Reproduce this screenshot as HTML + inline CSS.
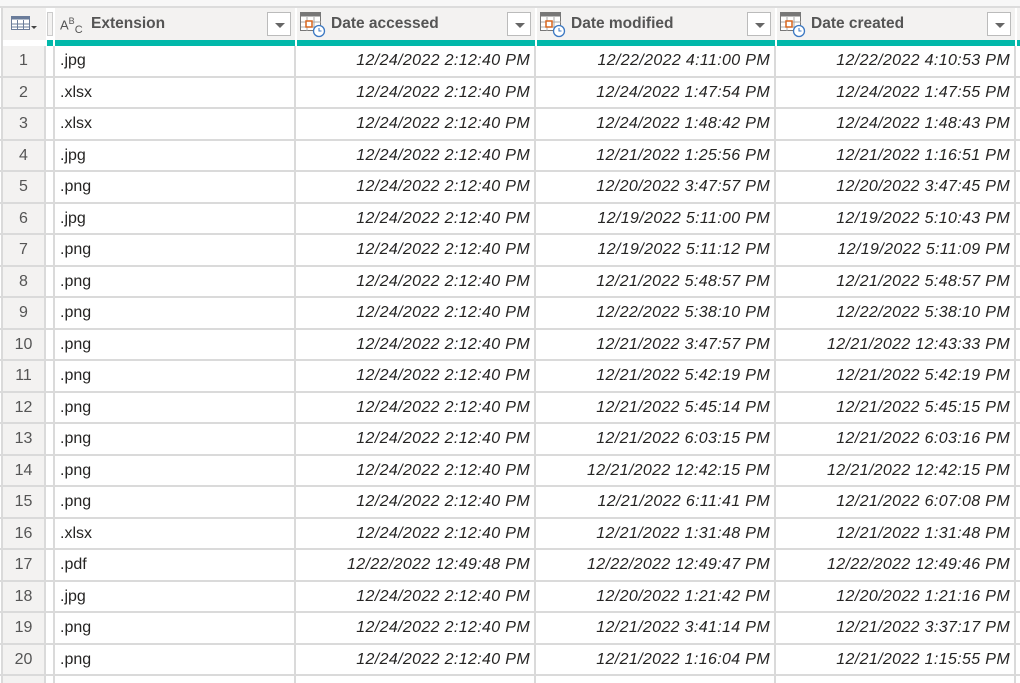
<!DOCTYPE html>
<html style="overflow:hidden;width:1020px;height:683px"><head><meta charset="utf-8"><style>
*{box-sizing:border-box;margin:0;padding:0}
body{width:1020px;height:683px;overflow:hidden;background:#fff;font-family:"Liberation Sans",sans-serif;position:relative}
.top{position:absolute;left:0;top:0;width:1020px;height:8px;background:#f7f7f7;border-bottom:2px solid #dcdcdc}
.hdr{position:absolute;top:8px;height:32px;background:#f3f2f1}
.teal{position:absolute;top:40px;height:6px;background:#01b8aa}
.hdr .t{position:absolute;top:7px;font-weight:bold;font-size:15.5px;color:#555}
.dd{position:absolute;top:4px;width:24px;height:24px;background:#fff;border:1px solid #bbb}
.dd:after{content:"";position:absolute;left:7px;top:10px;border-left:5px solid transparent;border-right:5px solid transparent;border-top:5px solid #666}
.rows{position:absolute;top:46px;left:0;width:1020px}
.r{height:31.5px;position:relative;border-bottom:2px solid #dadada;font-size:16px;color:#252423}
.r div{position:absolute;top:0;bottom:0;line-height:30px;white-space:nowrap}
.n{left:3px;width:43px;background:#f3f2f1;text-align:center;color:#555;border-right:2px solid #dadada}
.g{left:46px;width:9px;border-right:2px solid #dadada}
.e{left:55px;width:241px;padding-left:5px;border-right:2px solid #dadada}
.a,.m,.c{width:240px;text-align:right;padding-right:4px;font-style:italic;letter-spacing:0.35px;border-right:2px solid #dadada}
.a{left:296px}.m{left:536px}.c{left:776px}
.vl{position:absolute;top:8px;width:2px;height:675px;background:#dadada}
</style></head><body>
<div class="top"></div>
<div class="hdr" style="left:3px;width:43px"><svg style="position:absolute;left:8px;top:8px" width="26" height="16"><rect x="0.5" y="0.5" width="18" height="13" fill="#fff" stroke="#6a7c9a"/><rect x="0.5" y="0.5" width="18" height="3" fill="#6a7c9a"/><path d="M6.5 4v10M12.5 4v10M1 8h18M1 11h18" stroke="#6a7c9a"/><path d="M20 10l3 3 3-3z" fill="#444"/></svg></div>
<div class="hdr" style="left:47px;width:6px;border:1px solid #ccc;background:#f3f2f1;top:12px;height:24px"></div>
<div class="hdr" style="left:55px;width:240px"><span class="t" style="left:5px;font-weight:normal;font-size:13px;top:8px">A<sup style="font-size:9px">B</sup><sub style="font-size:11px">C</sub></span><span class="t" style="left:36px">Extension</span><div class="dd" style="left:212px"></div></div>
<div class="hdr" style="left:297px;width:238px"><svg style="position:absolute;left:3px;top:4px" width="26" height="26"><rect x="0.5" y="0.5" width="20" height="18" fill="#fff" stroke="#777"/><rect x="0.5" y="0.5" width="20" height="4" fill="#777"/><path d="M7 5v14M14 5v14M1 10h20M1 15h20" stroke="#aaa"/><rect x="6" y="9" width="6" height="6" fill="#fff" stroke="#d9661f" stroke-width="1.5"/><circle cx="19" cy="19" r="5.5" fill="#fff" stroke="#3b78c3" stroke-width="1.3"/><path d="M19 16v3h2.5" stroke="#3b78c3" fill="none"/></svg><span class="t" style="left:34px">Date accessed</span><div class="dd" style="left:210px"></div></div>
<div class="hdr" style="left:537px;width:238px"><svg style="position:absolute;left:3px;top:4px" width="26" height="26"><rect x="0.5" y="0.5" width="20" height="18" fill="#fff" stroke="#777"/><rect x="0.5" y="0.5" width="20" height="4" fill="#777"/><path d="M7 5v14M14 5v14M1 10h20M1 15h20" stroke="#aaa"/><rect x="6" y="9" width="6" height="6" fill="#fff" stroke="#d9661f" stroke-width="1.5"/><circle cx="19" cy="19" r="5.5" fill="#fff" stroke="#3b78c3" stroke-width="1.3"/><path d="M19 16v3h2.5" stroke="#3b78c3" fill="none"/></svg><span class="t" style="left:34px">Date modified</span><div class="dd" style="left:210px"></div></div>
<div class="hdr" style="left:777px;width:238px"><svg style="position:absolute;left:3px;top:4px" width="26" height="26"><rect x="0.5" y="0.5" width="20" height="18" fill="#fff" stroke="#777"/><rect x="0.5" y="0.5" width="20" height="4" fill="#777"/><path d="M7 5v14M14 5v14M1 10h20M1 15h20" stroke="#aaa"/><rect x="6" y="9" width="6" height="6" fill="#fff" stroke="#d9661f" stroke-width="1.5"/><circle cx="19" cy="19" r="5.5" fill="#fff" stroke="#3b78c3" stroke-width="1.3"/><path d="M19 16v3h2.5" stroke="#3b78c3" fill="none"/></svg><span class="t" style="left:34px">Date created</span><div class="dd" style="left:210px"></div></div>
<div class="hdr" style="left:1017px;width:3px"></div>
<div class="teal" style="left:47px;width:6px"></div>
<div class="teal" style="left:55px;width:240px"></div>
<div class="teal" style="left:297px;width:238px"></div>
<div class="teal" style="left:537px;width:238px"></div>
<div class="teal" style="left:777px;width:238px"></div>
<div class="teal" style="left:1017px;width:3px"></div>
<div class="vl" style="left:1px"></div>
<div class="rows">
<div class="r"><div class="n">1</div><div class="g"></div><div class="e">.jpg</div><div class="a">12/24/2022 2:12:40 PM</div><div class="m">12/22/2022 4:11:00 PM</div><div class="c">12/22/2022 4:10:53 PM</div></div>
<div class="r"><div class="n">2</div><div class="g"></div><div class="e">.xlsx</div><div class="a">12/24/2022 2:12:40 PM</div><div class="m">12/24/2022 1:47:54 PM</div><div class="c">12/24/2022 1:47:55 PM</div></div>
<div class="r"><div class="n">3</div><div class="g"></div><div class="e">.xlsx</div><div class="a">12/24/2022 2:12:40 PM</div><div class="m">12/24/2022 1:48:42 PM</div><div class="c">12/24/2022 1:48:43 PM</div></div>
<div class="r"><div class="n">4</div><div class="g"></div><div class="e">.jpg</div><div class="a">12/24/2022 2:12:40 PM</div><div class="m">12/21/2022 1:25:56 PM</div><div class="c">12/21/2022 1:16:51 PM</div></div>
<div class="r"><div class="n">5</div><div class="g"></div><div class="e">.png</div><div class="a">12/24/2022 2:12:40 PM</div><div class="m">12/20/2022 3:47:57 PM</div><div class="c">12/20/2022 3:47:45 PM</div></div>
<div class="r"><div class="n">6</div><div class="g"></div><div class="e">.jpg</div><div class="a">12/24/2022 2:12:40 PM</div><div class="m">12/19/2022 5:11:00 PM</div><div class="c">12/19/2022 5:10:43 PM</div></div>
<div class="r"><div class="n">7</div><div class="g"></div><div class="e">.png</div><div class="a">12/24/2022 2:12:40 PM</div><div class="m">12/19/2022 5:11:12 PM</div><div class="c">12/19/2022 5:11:09 PM</div></div>
<div class="r"><div class="n">8</div><div class="g"></div><div class="e">.png</div><div class="a">12/24/2022 2:12:40 PM</div><div class="m">12/21/2022 5:48:57 PM</div><div class="c">12/21/2022 5:48:57 PM</div></div>
<div class="r"><div class="n">9</div><div class="g"></div><div class="e">.png</div><div class="a">12/24/2022 2:12:40 PM</div><div class="m">12/22/2022 5:38:10 PM</div><div class="c">12/22/2022 5:38:10 PM</div></div>
<div class="r"><div class="n">10</div><div class="g"></div><div class="e">.png</div><div class="a">12/24/2022 2:12:40 PM</div><div class="m">12/21/2022 3:47:57 PM</div><div class="c">12/21/2022 12:43:33 PM</div></div>
<div class="r"><div class="n">11</div><div class="g"></div><div class="e">.png</div><div class="a">12/24/2022 2:12:40 PM</div><div class="m">12/21/2022 5:42:19 PM</div><div class="c">12/21/2022 5:42:19 PM</div></div>
<div class="r"><div class="n">12</div><div class="g"></div><div class="e">.png</div><div class="a">12/24/2022 2:12:40 PM</div><div class="m">12/21/2022 5:45:14 PM</div><div class="c">12/21/2022 5:45:15 PM</div></div>
<div class="r"><div class="n">13</div><div class="g"></div><div class="e">.png</div><div class="a">12/24/2022 2:12:40 PM</div><div class="m">12/21/2022 6:03:15 PM</div><div class="c">12/21/2022 6:03:16 PM</div></div>
<div class="r"><div class="n">14</div><div class="g"></div><div class="e">.png</div><div class="a">12/24/2022 2:12:40 PM</div><div class="m">12/21/2022 12:42:15 PM</div><div class="c">12/21/2022 12:42:15 PM</div></div>
<div class="r"><div class="n">15</div><div class="g"></div><div class="e">.png</div><div class="a">12/24/2022 2:12:40 PM</div><div class="m">12/21/2022 6:11:41 PM</div><div class="c">12/21/2022 6:07:08 PM</div></div>
<div class="r"><div class="n">16</div><div class="g"></div><div class="e">.xlsx</div><div class="a">12/24/2022 2:12:40 PM</div><div class="m">12/21/2022 1:31:48 PM</div><div class="c">12/21/2022 1:31:48 PM</div></div>
<div class="r"><div class="n">17</div><div class="g"></div><div class="e">.pdf</div><div class="a">12/22/2022 12:49:48 PM</div><div class="m">12/22/2022 12:49:47 PM</div><div class="c">12/22/2022 12:49:46 PM</div></div>
<div class="r"><div class="n">18</div><div class="g"></div><div class="e">.jpg</div><div class="a">12/24/2022 2:12:40 PM</div><div class="m">12/20/2022 1:21:42 PM</div><div class="c">12/20/2022 1:21:16 PM</div></div>
<div class="r"><div class="n">19</div><div class="g"></div><div class="e">.png</div><div class="a">12/24/2022 2:12:40 PM</div><div class="m">12/21/2022 3:41:14 PM</div><div class="c">12/21/2022 3:37:17 PM</div></div>
<div class="r"><div class="n">20</div><div class="g"></div><div class="e">.png</div><div class="a">12/24/2022 2:12:40 PM</div><div class="m">12/21/2022 1:16:04 PM</div><div class="c">12/21/2022 1:15:55 PM</div></div>
<div class="r"><div class="n"></div><div class="g"></div><div class="e"></div><div class="a"></div><div class="m"></div><div class="c"></div></div>
</div>
</body></html>
